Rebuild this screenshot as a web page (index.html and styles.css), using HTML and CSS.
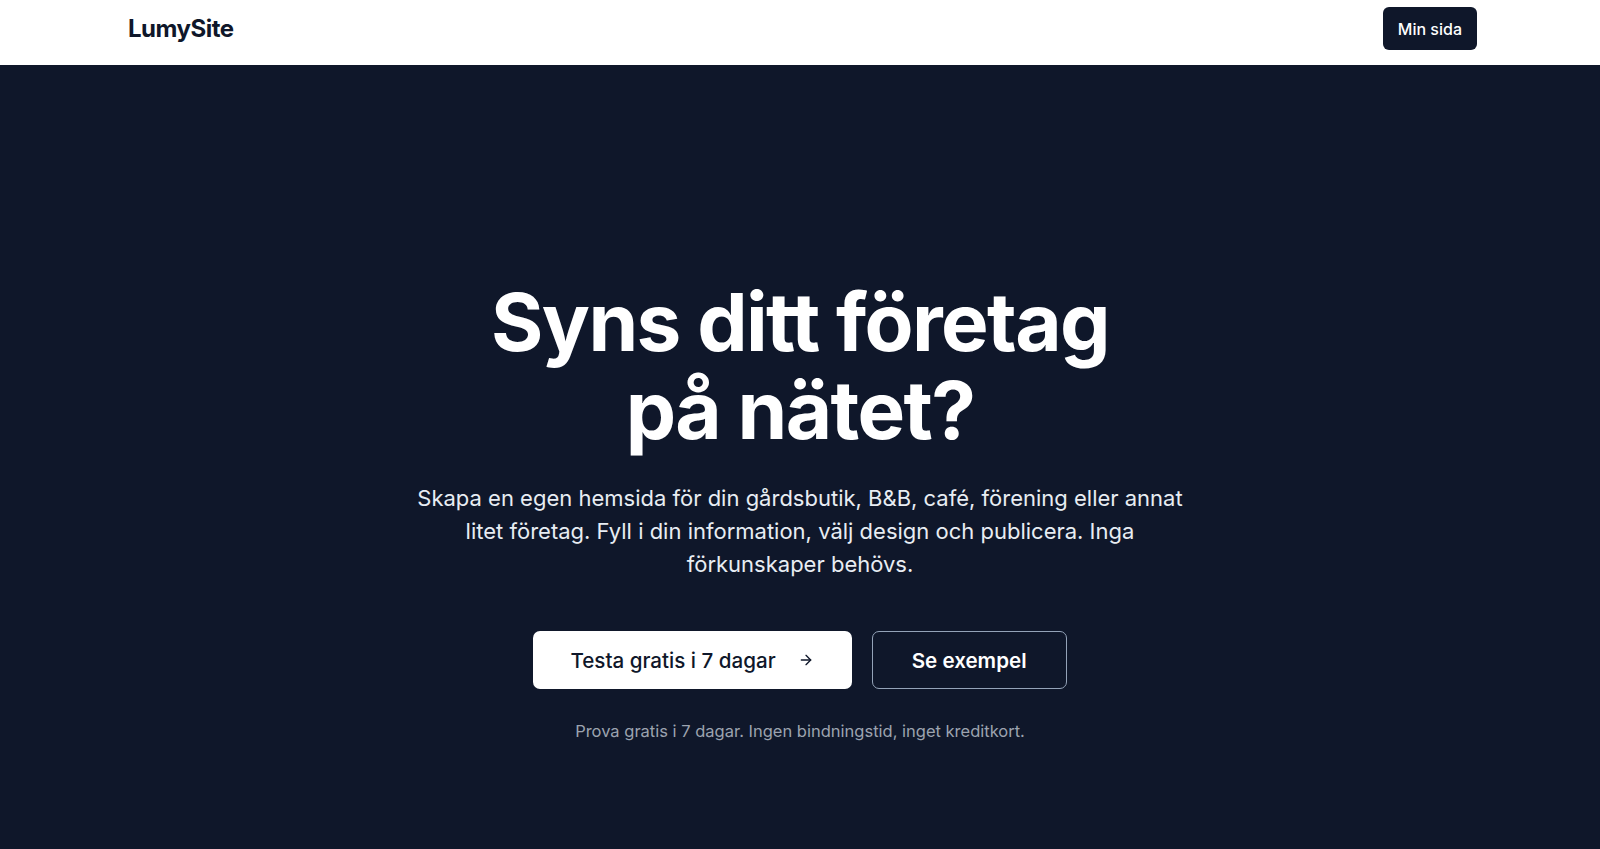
FILE: index.html
```html
<!DOCTYPE html>
<html lang="sv">
<head>
<meta charset="utf-8">
<title>LumySite</title>
<link rel="stylesheet" href="styles.css">
</head>
<body>
<header class="topbar">
  <div class="topbar-inner">
    <a class="logo" href="#">LumySite</a>
    <a class="btn-nav" href="#">Min sida</a>
  </div>
</header>
<main class="hero">
  <h1 class="hero-title">Syns ditt företag<br>på nätet?</h1>
  <p class="hero-lead">Skapa en egen hemsida för din gårdsbutik, B&amp;B, café, förening eller annat litet företag. Fyll i din information, välj design och publicera. Inga förkunskaper behövs.</p>
  <div class="hero-actions">
    <a class="btn btn-primary" href="#">Testa gratis i 7 dagar
      <svg class="arrow" width="16" height="16" viewBox="0 0 24 24" fill="none" stroke="currentColor" stroke-width="2" stroke-linecap="round" stroke-linejoin="round"><path d="M5 12h14"/><path d="m12 5 7 7-7 7"/></svg>
    </a>
    <a class="btn btn-outline" href="#">Se exempel</a>
  </div>
  <p class="hero-note">Prova gratis i 7 dagar. Ingen bindningstid, inget kreditkort.</p>
</main>
</body>
</html>
```

FILE: styles.css
```css
* { box-sizing: border-box; }
html, body { margin: 0; padding: 0; }
body {
  font-family: Inter, "Noto Sans", sans-serif;
  background: #0f172a;
  color: #0f172a;
  min-height: 849px;
}
a { text-decoration: none; }

.topbar {
  background: #ffffff;
  height: 65px;
}
.topbar-inner {
  padding: 0 123px 8px 128px;
  height: 100%;
  display: flex;
  align-items: center;
  justify-content: space-between;
}
.logo {
  font-size: 24px;
  font-weight: 700;
  letter-spacing: -0.02em;
  color: #0f172a;
}
.btn-nav {
  display: inline-flex;
  align-items: center;
  height: 43px;
  padding: 0 15px;
  background: #0f172a;
  color: #fff;
  border-radius: 6px;
  font-size: 16px;
  font-weight: 500;
}

.hero {
  background: #0f172a;
  padding: 213px 24px 80px;
  display: flex;
  flex-direction: column;
  align-items: center;
  text-align: center;
}
.hero-title {
  margin: 0;
  color: #ffffff;
  font-size: 80px;
  line-height: 88px;
  font-weight: 700;
  letter-spacing: -0.02em;
}
.hero-lead {
  margin: 28px 0 0;
  max-width: 790px;
  color: #e8edf3;
  font-size: 22px;
  line-height: 33px;
}
.hero-actions {
  margin-top: 50px;
  display: flex;
  gap: 20px;
}
.btn {
  display: inline-flex;
  align-items: center;
  justify-content: center;
  height: 58px;
  border-radius: 7px;
  font-size: 20.6px;
  font-weight: 500;
}
.btn-primary {
  background: #ffffff;
  color: #0f172a;
  padding: 0 38px 0 37px;
  gap: 22px;
}
.btn-outline {
  border: 1px solid #94a3b8;
  color: #ffffff;
  padding: 0 39px;
  font-weight: 600;
}
.arrow { display: block; }
.hero-note {
  margin: 30px 0 0;
  color: #9ca3af;
  font-size: 16.5px;
  line-height: 24px;
}
```
